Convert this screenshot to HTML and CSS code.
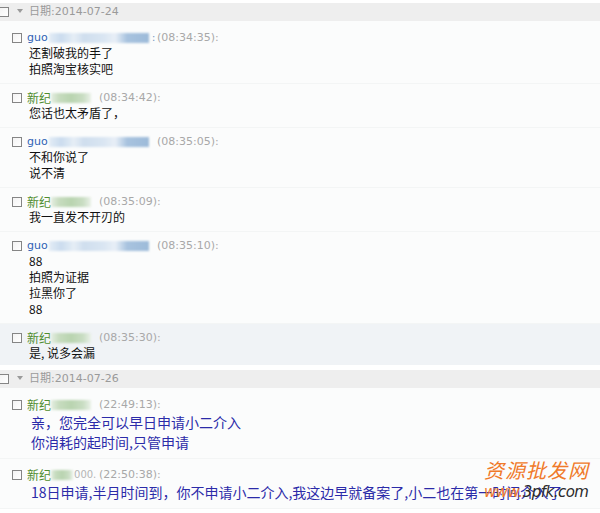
FILE: index.html
```html
<!DOCTYPE html>
<html lang="zh-CN">
<head>
<meta charset="utf-8">
<title>聊天记录</title>
<link rel="stylesheet" href="styles.css">
</head>
<body>
<div class="page">
  <section class="day">
    <div class="day-head"><span class="cb cb-day"></span><span class="tri"></span><span class="date">日期:2014-07-24</span></div>
    <div class="msgs">
      <div class="msg">
        <div class="mh"><span class="cb"></span><span class="who who-g"><span class="n-g">guo</span><span class="blur blur-g"></span><span class="colon">:</span></span><span class="time">(08:34:35):</span></div>
        <div class="mb"><p>还割破我的手了</p><p>拍照淘宝核实吧</p></div>
      </div>
      <div class="msg">
        <div class="mh"><span class="cb"></span><span class="who who-x"><span class="n-x">新纪</span><span class="blur blur-x"></span></span><span class="time">(08:34:42):</span></div>
        <div class="mb"><p>您话也太矛盾了，</p></div>
      </div>
      <div class="msg">
        <div class="mh"><span class="cb"></span><span class="who who-g"><span class="n-g">guo</span><span class="blur blur-g"></span></span><span class="time">(08:35:05):</span></div>
        <div class="mb"><p>不和你说了</p><p>说不清</p></div>
      </div>
      <div class="msg">
        <div class="mh"><span class="cb"></span><span class="who who-x"><span class="n-x">新纪</span><span class="blur blur-x"></span></span><span class="time">(08:35:09):</span></div>
        <div class="mb"><p>我一直发不开刃的</p></div>
      </div>
      <div class="msg">
        <div class="mh"><span class="cb"></span><span class="who who-g"><span class="n-g">guo</span><span class="blur blur-g"></span></span><span class="time">(08:35:10):</span></div>
        <div class="mb"><p>88</p><p>拍照为证据</p><p>拉黑你了</p><p>88</p></div>
      </div>
      <div class="msg msg-hl">
        <div class="mh"><span class="cb"></span><span class="who who-x"><span class="n-x">新纪</span><span class="blur blur-x"></span></span><span class="time">(08:35:30):</span></div>
        <div class="mb"><p>是, 说多会漏</p></div>
      </div>
    </div>
  </section>
  <section class="day">
    <div class="day-head"><span class="cb cb-day"></span><span class="tri"></span><span class="date">日期:2014-07-26</span></div>
    <div class="msgs">
      <div class="msg">
        <div class="mh"><span class="cb"></span><span class="who who-x"><span class="n-x">新纪</span><span class="blur blur-x"></span></span><span class="time">(22:49:13):</span></div>
        <div class="mb mb-blue"><p>亲，您完全可以早日申请小二介入</p><p>你消耗的起时间,只管申请</p></div>
      </div>
      <div class="msg msg-last">
        <div class="mh"><span class="cb"></span><span class="who who-x"><span class="n-x">新纪</span><span class="blur blur-x blur-short"></span><span class="tail">000.</span></span><span class="time">(22:50:38):</span></div>
        <div class="mb mb-blue"><p>18日申请,半月时间到，你不申请小二介入,我这边早就备案了,小二也在第一时间介入了</p></div>
      </div>
    </div>
  </section>
  <div class="wm">
    <div class="wm-cn">资源批发网</div>
    <div class="wm-url"><span class="wm-o">www.</span>3pfk.com</div>
  </div>
</div>
</body>
</html>
```

FILE: styles.css
```css
html, body {
  margin: 0;
  padding: 0;
  background: #fff;
}
.page {
  position: relative;
  width: 600px;
  height: 513px;
  overflow: hidden;
  padding-top: 3px;
  box-sizing: border-box;
  font-family: "Noto Sans CJK SC", "DejaVu Sans", sans-serif;
  font-size: 12px;
  color: #111;
}
.day + .day {
  margin-top: 5px;
}
.day-head {
  display: flex;
  align-items: center;
  height: 18px;
  line-height: 18px;
  background: #eeeeee;
}
.cb {
  display: inline-block;
  box-sizing: border-box;
  width: 10px;
  height: 10px;
  border: 1px solid #858585;
  background: linear-gradient(135deg, #f3f3f3, #ffffff);
  flex: none;
}
.cb-day {
  margin-left: -1px;
}
.tri {
  width: 0;
  height: 0;
  margin-left: 8px;
  border-left: 3px solid transparent;
  border-right: 3px solid transparent;
  border-top: 4px solid #9a9a9a;
  margin-top: -3px;
}
.date {
  margin-left: 6px;
  font-family: "DejaVu Sans", "Noto Sans CJK SC", sans-serif;
  font-size: 11px;
  color: #9a9a9a;
}
.msgs {
  padding-top: 3px;
  background: #fbfcfc;
}
.msg {
  padding: 6px 0 6px 12px;
  border-bottom: 1px solid #f3f5f5;
}
.msg-hl {
  background: #f0f3f6;
  border-bottom: none;
  padding-bottom: 4px;
}
.msg-last {
  padding-top: 8px;
}
.mh {
  display: flex;
  align-items: center;
  height: 15px;
  line-height: 15px;
  overflow: hidden;
}
.mh .cb {
  margin-right: 5px;
}
.who {
  display: flex;
  align-items: center;
  flex: none;
  height: 15px;
}
.who-g {
  width: 130px;
}
.who-x {
  width: 72px;
}
.n-g {
  font-family: "DejaVu Sans", sans-serif;
  font-size: 11px;
  color: #2f62b5;
}
.n-x {
  font-size: 12px;
  color: #4f8d2f;
}
.blur {
  display: inline-block;
  height: 10px;
  filter: blur(1px);
}
.blur-g {
  width: 100px;
  margin-left: 1px;
  background: linear-gradient(90deg, #e4edf6 0%, #cbdcee 12%, #e6eef6 25%, #cfdeee 35%, #dae6f2 55%, #e8eff7 66%, #a8c3df 78%, #9dbbd9 100%);
}
.blur-x {
  width: 40px;
  background: linear-gradient(90deg, #e5eee2 0%, #c7dcbf 20%, #b9d4b0 50%, #c9ddc3 80%, #eaf1e8 100%);
}
.blur-short {
  width: 22px;
}
.tail {
  color: #b5b5b5;
  font-family: "DejaVu Sans", sans-serif;
  font-size: 10px;
  margin-left: 1px;
}
.colon {
  font-family: "DejaVu Sans", sans-serif;
  font-size: 11px;
  color: #7e9dc4;
  margin-left: 3px;
}
.time {
  font-family: "DejaVu Sans", sans-serif;
  font-size: 11px;
  color: #a8a8a8;
}
.mb {
  padding-left: 17px;
}
.mb p {
  margin: 0;
  line-height: 16px;
  white-space: nowrap;
}
.mb-blue {
  padding-left: 19px;
  font-size: 14px;
  color: #2b2ba9;
}
.mb-blue p {
  line-height: 20px;
}
.wm {
  position: absolute;
  left: 484px;
  top: 458px;
  width: 116px;
}
.wm-cn {
  font-size: 20px;
  line-height: 24px;
  color: #f07a2a;
  letter-spacing: 1px;
  font-style: italic;
}
.wm-url {
  margin-top: 1px;
  font-family: "DejaVu Sans", sans-serif;
  font-size: 15px;
  line-height: 18px;
  font-style: italic;
  color: #2a2a2a;
  letter-spacing: -0.5px;
}
.wm-o {
  color: #f07a2a;
}
```
